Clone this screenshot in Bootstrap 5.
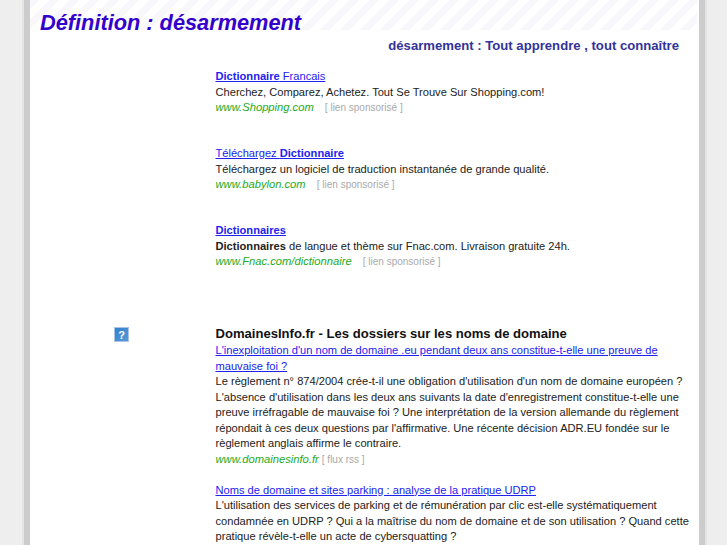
<!DOCTYPE html>
<html lang="fr"><head><meta charset="utf-8">
<link href="https://cdn.jsdelivr.net/npm/bootstrap@5.3.0/dist/css/bootstrap.min.css" rel="stylesheet">
<style>
html,body{height:545px;overflow:hidden;}
body{background:#eee;font-family:"Liberation Sans",Arial,sans-serif;font-size:11.12px;line-height:15.5px;color:#222;}
.sheet{width:669px;margin-left:30px;height:545px;background:#fff;box-shadow:-6px 0 0 #ccc,6px 0 0 #ccc,-8px 0 0 #e4e4e4,8px 0 0 #e4e4e4;overflow:hidden;}
.hatch{height:30px;width:667px;padding-left:10px;background:repeating-linear-gradient(135deg,#f8f8fc 0 7px,#fff 7px 14.14px);}
.hatch h1{font-size:21.75px;font-weight:700;font-style:italic;color:#3300cc;margin:0;line-height:46px;white-space:nowrap;}
.tagline{font-size:13.14px;font-weight:700;color:#333399;text-align:right;padding-right:20px;margin:0;line-height:16px;padding-top:8px;}
.gutter{width:185.5px;flex:none;position:relative;}
.helpbox{position:absolute;left:84px;top:2px;width:15px;height:15px;}
.main{width:474px;flex:none;}
.main a{color:#2222ee;text-decoration:underline;}
.ad{height:77px;}
.url{color:#22aa22;font-style:italic;font-size:11.2px;}
.tag{color:#aaa;font-size:10px;margin-left:8px;}
.rss{color:#aaa;font-size:10px;}
.heading{font-size:13.07px;font-weight:700;color:#111;line-height:18px;}
.adlist{padding-top:15px;}
.articles{padding-top:25px;}
</style></head><body>
<div class="sheet">
<div class="hatch"><h1>Définition : désarmement</h1></div>
<p class="tagline">désarmement : Tout apprendre , tout connaître</p>
<div class="d-flex adlist">
<div class="gutter"></div>
<div class="main">
<div class="ad"><a href="#"><b>Dictionnaire</b> Francais</a><br>Cherchez, Comparez, Achetez. Tout Se Trouve Sur Shopping.com!<br><span class="url">www.Shopping.com</span> <span class="tag">[ lien sponsorisé ]</span></div>
<div class="ad"><a href="#">Téléchargez <b>Dictionnaire</b></a><br>Téléchargez un logiciel de traduction instantanée de grande qualité.<br><span class="url">www.babylon.com</span> <span class="tag">[ lien sponsorisé ]</span></div>
<div class="ad"><a href="#"><b>Dictionnaires</b></a><br><b>Dictionnaires</b> de langue et thème sur Fnac.com. Livraison gratuite 24h.<br><span class="url">www.Fnac.com/dictionnaire</span> <span class="tag">[ lien sponsorisé ]</span></div>
</div>
</div>
<div class="d-flex articles">
<div class="gutter"><svg class="helpbox" viewBox="0 0 15 15"><defs><linearGradient id="hb" x1="0" y1="0" x2="1" y2="1"><stop offset="0" stop-color="#2f7fd0"/><stop offset="1" stop-color="#5a9ad6"/></linearGradient></defs><rect x=".5" y=".5" width="14" height="14" fill="url(#hb)" stroke="#a9c4e4"/><text x="7.5" y="11.5" text-anchor="middle" font-family="Liberation Sans" font-size="11" font-weight="700" fill="#fff">?</text></svg></div>
<div class="main">
<div class="heading">DomainesInfo.fr - Les dossiers sur les noms de domaine</div>
<a href="#">L'inexploitation d'un nom de domaine .eu pendant deux ans constitue-t-elle une preuve de mauvaise foi ?</a><br>
Le règlement n° 874/2004 crée-t-il une obligation d'utilisation d'un nom de domaine européen ? L'absence d'utilisation dans les deux ans suivants la date d'enregistrement constitue-t-elle une preuve irréfragable de mauvaise foi ? Une interprétation de la version allemande du règlement répondait à ces deux questions par l'affirmative. Une récente décision ADR.EU fondée sur le règlement anglais affirme le contraire.<br>
<span class="url">www.domainesinfo.fr</span> <span class="rss">[ flux rss ]</span><br><br>
<a href="#">Noms de domaine et sites parking : analyse de la pratique UDRP</a><br>
L'utilisation des services de parking et de rémunération par clic est-elle systématiquement condamnée en UDRP ? Qui a la maîtrise du nom de domaine et de son utilisation ? Quand cette pratique révèle-t-elle un acte de cybersquatting ?
</div>
</div>
</div>
<script src="https://cdn.jsdelivr.net/npm/bootstrap@5.3.0/dist/js/bootstrap.bundle.min.js"></script>
</body></html>
